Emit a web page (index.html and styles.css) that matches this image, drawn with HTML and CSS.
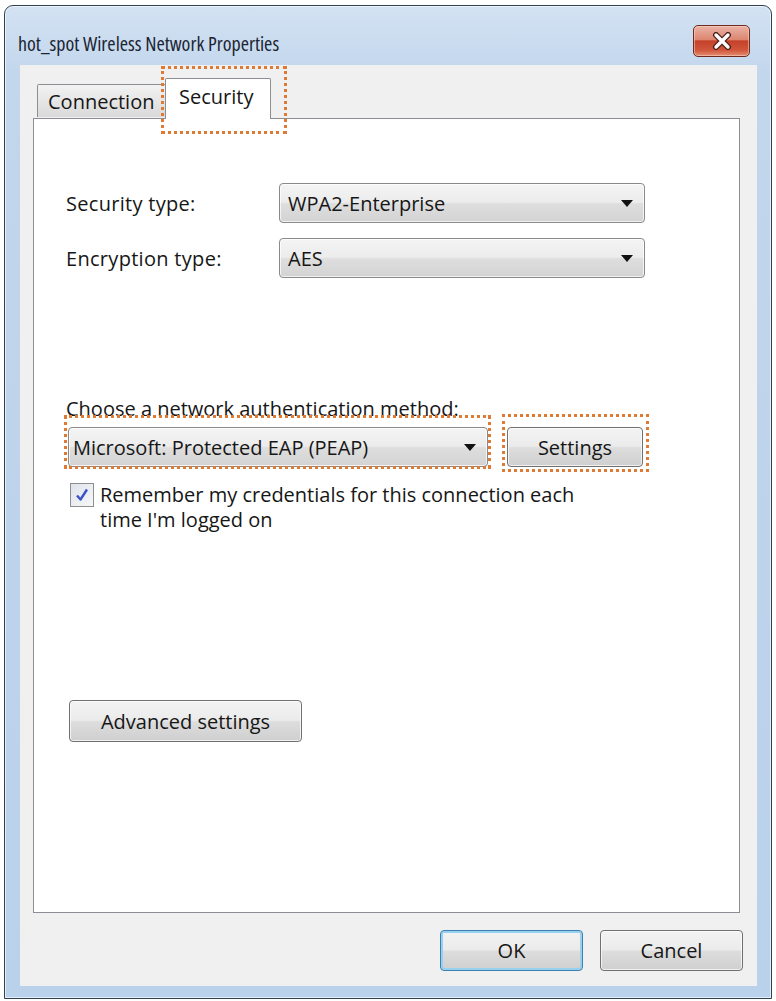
FILE: index.html
```html
<!DOCTYPE html>
<html lang="en">
<head>
  <meta charset="UTF-8" />
  <title>hot_spot Wireless Network Properties</title>
  <link rel="stylesheet" href="styles.css">
</head>
<body>
  <div class="window">
    <div class="titlebar">
      <span class="title">hot_spot Wireless Network Properties</span>
      <button class="close" aria-label="Close">
        <svg width="22" height="18" viewBox="0 0 22 18">
          <path d="M5 3 L17 15 M17 3 L5 15" stroke="#4a2018" stroke-width="6" stroke-linecap="round"/>
          <path d="M5 3 L17 15 M17 3 L5 15" stroke="#ffffff" stroke-width="3.4" stroke-linecap="round"/>
        </svg>
      </button>
    </div>

    <div class="client">
      <div class="tabs">
        <div class="tab">Connection</div>
        <div class="tab active hl hl-tab">Security</div>
      </div>

      <div class="panel">
        <div class="fields">
          <span class="label">Security type:</span>
          <div class="select">WPA2-Enterprise<span class="arrow"></span></div>
          <span class="label">Encryption type:</span>
          <div class="select">AES<span class="arrow"></span></div>
        </div>

        <p class="auth-label">Choose a network authentication method:</p>
        <div class="auth-row">
          <div class="select auth hl hl-auth">Microsoft: Protected EAP (PEAP)<span class="arrow"></span></div>
          <button class="btn settings hl hl-settings">Settings</button>
        </div>

        <div class="check">
          <span class="box">
            <svg width="16" height="16" viewBox="0 0 16 16">
              <path d="M3 8.5 L6.5 12.5 L13 2.5" fill="none" stroke="#3b55c9" stroke-width="2.4" stroke-linejoin="round"/>
            </svg>
          </span>
          <span class="check-text">Remember my credentials for this connection each<br>time I'm logged on</span>
        </div>

        <button class="btn advanced">Advanced settings</button>
      </div>

      <div class="actions">
        <button class="btn default">OK</button>
        <button class="btn">Cancel</button>
      </div>
    </div>
  </div>
</body>
</html>
```

FILE: styles.css
```css
body {
  margin: 0;
  padding: 5px 4px 2px;
  background-color: #ffffff;
  font-family: 'Open Sans', 'Noto Sans', sans-serif;
  color: #161616;
}

.window {
  box-sizing: border-box;
  height: 994px;
  display: flex;
  flex-direction: column;
  border: 1px solid #33404f;
  border-radius: 9px 9px 0 0;
  background: linear-gradient(to bottom, #d3e2f3 0, #c2d6ec 70px, #b9d1ea 100%);
  box-shadow: inset 0 0 0 1px rgba(255, 255, 255, 0.6);
  padding-bottom: 12px;
}

.titlebar {
  height: 59px;
  flex: none;
  display: flex;
  justify-content: space-between;
  align-items: flex-start;
  padding: 0 21px 0 13px;
}

.title {
  font-size: 20px;
  font-stretch: 80%;
  line-height: 24px;
  margin-top: 26px;
  color: #1b2533;
}

.close {
  width: 57px;
  height: 32px;
  margin-top: 19px;
  padding: 0;
  border: 1px solid #6e2a1e;
  border-radius: 5px;
  background: linear-gradient(to bottom, #eab3a6 0%, #dc8670 45%, #c5412a 50%, #d0553b 80%, #e38d70 100%);
  display: flex;
  align-items: center;
  justify-content: center;
  box-shadow: inset 0 0 0 1px rgba(255, 220, 210, 0.5);
}

.client {
  flex: 1;
  display: flex;
  flex-direction: column;
  margin: 0 14px 0 15px;
  padding: 13px 17px 15px 13px;
  background-color: #f0f0f0;
}

.tabs {
  height: 40px;
  display: flex;
  align-items: flex-end;
  padding-left: 4px;
  position: relative;
  z-index: 1;
}

.tab {
  width: 129px;
  height: 33px;
  box-sizing: border-box;
  padding-left: 10px;
  font-size: 20px;
  line-height: 33px;
  border: 1px solid #8c8e94;
  border-bottom: none;
  border-radius: 2px 2px 0 0;
  background: linear-gradient(to bottom, #f2f2f2 0%, #e6e6e6 50%, #d9d9d9 100%);
  margin-bottom: 1px;
  white-space: nowrap;
}

.tab.active {
  height: 41px;
  width: 106px;
  margin-bottom: -1px;
  margin-left: -1px;
  padding-left: 13px;
  background: #ffffff;
  line-height: 36px;
}

.hl {
  position: relative;
}

.hl::after {
  content: "";
  position: absolute;
  border: 3px dotted #df7a35;
  pointer-events: none;
}

.hl-tab::after {
  inset: -13px -17px -15px -5px;
}

.hl-auth::after {
  inset: -13px -4px -3px -5px;
}

.hl-settings::after {
  inset: -14px -7px -6px -6px;
}

.panel {
  flex: 1;
  border: 1px solid #8b8e95;
  background-color: #ffffff;
  padding: 64px 0 0 32px;
}

.fields {
  display: grid;
  grid-template-columns: 213px 366px;
  grid-auto-rows: 40px;
  row-gap: 15px;
  align-items: center;
}

.label {
  font-size: 20px;
  letter-spacing: 0.3px;
}

.select {
  height: 40px;
  box-sizing: border-box;
  position: relative;
  display: flex;
  align-items: center;
  padding-left: 8px;
  font-size: 20px;
  border: 1px solid #8a8a8a;
  border-radius: 4px;
  background: linear-gradient(to bottom, #f4f4f4 0%, #ececec 48%, #dedede 52%, #d3d3d3 100%);
  box-shadow: inset 0 0 0 1px rgba(255, 255, 255, 0.7);
}

.arrow {
  position: absolute;
  right: 11px;
  top: 16px;
  width: 0;
  height: 0;
  border-left: 6px solid transparent;
  border-right: 6px solid transparent;
  border-top: 7px solid #111111;
}

.auth-label {
  margin: 119px 0 0;
  font-size: 20px;
  line-height: 24px;
}

.auth-row {
  display: flex;
  gap: 19px;
  margin-top: 6px;
}

.select.auth {
  width: 420px;
  margin-left: 2px;
  padding-left: 4px;
}

.btn {
  font-family: 'Open Sans', 'Noto Sans', sans-serif;
  font-size: 20px;
  color: #161616;
  height: 40px;
  padding: 0;
  border: 1px solid #707070;
  border-radius: 4px;
  background: linear-gradient(to bottom, #f3f3f3 0%, #ebebeb 48%, #dddddd 52%, #cfcfcf 100%);
  box-shadow: inset 0 0 0 1px rgba(255, 255, 255, 0.7);
}

.settings {
  width: 136px;
}

.check {
  display: flex;
  align-items: flex-start;
  margin: 16px 0 0 4px;
}

.box {
  width: 24px;
  height: 24px;
  box-sizing: border-box;
  border: 1px solid #8e8f8f;
  background: linear-gradient(135deg, #dfe3ea, #f7f7f9);
  display: flex;
  align-items: center;
  justify-content: center;
  flex: none;
}

.check-text {
  margin-left: 6px;
  font-size: 20px;
  line-height: 25px;
  margin-top: -1px;
}

.advanced {
  display: block;
  width: 233px;
  height: 42px;
  margin: 168px 0 0 3px;
}

.actions {
  display: flex;
  justify-content: flex-end;
  gap: 17px;
  margin: 17px -3px 0 0;
}

.actions .btn {
  width: 143px;
  height: 41px;
}

.btn.default {
  border-color: #3c7fb1;
  box-shadow: inset 0 0 0 2px #98d1ef;
}
```
